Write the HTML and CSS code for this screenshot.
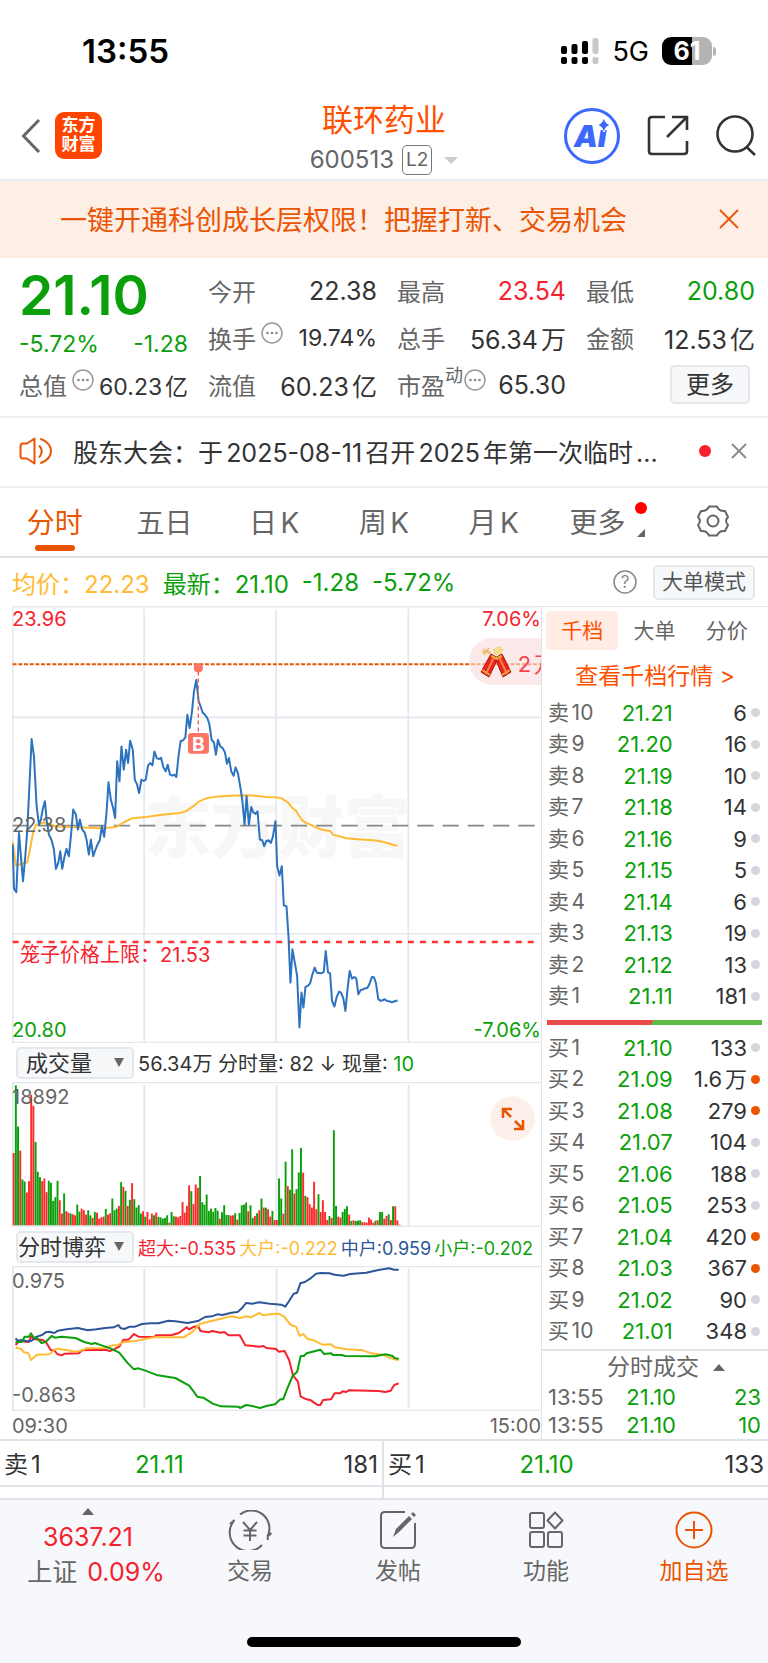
FILE: index.html
```html
<!DOCTYPE html>
<html lang="zh-CN">
<head>
<meta charset="utf-8">
<meta name="viewport" content="width=device-width, initial-scale=1">
<title>联环药业 600513</title>
<link rel="stylesheet" href="styles.css">
</head>
<body>
<div class="status">
  <span class="clock">13:55</span>
  <div class="status-right">
    <svg class="signal" viewBox="0 0 38 27" aria-hidden="true">
      <g fill="#000"><rect x="0" y="8" width="6" height="8" rx="2"/><rect x="10.500" y="6" width="6" height="10" rx="2"/><rect x="21" y="3" width="6" height="13" rx="2"/><rect x="0" y="19" width="6" height="7" rx="2"/><rect x="10.500" y="19" width="6" height="7" rx="2"/><rect x="21" y="19" width="6" height="7" rx="2"/></g>
      <g fill="#c8c8c8"><rect x="31.500" y="0" width="6" height="16" rx="2"/><rect x="31.500" y="19" width="6" height="7" rx="2"/></g>
    </svg>
    <span class="net">5G</span>
    <span class="battery"><span class="battery-body">61</span><span class="battery-tip"></span></span>
  </div>
</div>

<header class="top">
  <div class="top-left">
    <button class="plain" aria-label="返回"><svg width="20" height="36" viewBox="0 0 20 36"><path d="M18 2 2.500 18 18 34" fill="none" stroke="#666" stroke-width="3"/></svg></button>
    <a class="logo" href="#">东方<br>财富</a>
  </div>
  <div class="top-title">
    <h1>联环药业</h1>
    <div class="code"><span>600513</span><span class="l2">L2</span><i class="caret"></i></div>
  </div>
  <div class="top-right">
    <button class="plain" aria-label="Ai"><svg width="58" height="58" viewBox="0 0 58 58"><circle cx="29" cy="29" r="26.500" fill="#fff" stroke="#3c68fd" stroke-width="3"/><text class="ai" x="11" y="40">Ai</text><path d="M41 11 43 15.500 47 18 43 20.500 41 25 38.500 20.500 35 18 38.500 15.500Z" fill="#3c68fd" stroke="#fff" stroke-width="1"/></svg></button>
    <button class="plain" aria-label="分享"><svg width="42" height="42" viewBox="0 0 42 42" fill="none" stroke="#333" stroke-width="2.600"><path d="M18 2H5Q2 2 2 5V36Q2 39 5 39H37Q40 39 40 36V26M25 2H40V15M40 2 20 22"/></svg></button>
    <button class="plain" aria-label="搜索"><svg width="42" height="42" viewBox="0 0 42 42" fill="none" stroke="#333" stroke-width="2.600"><circle cx="20" cy="19" r="17.500"/><path d="M31.500 32 40 40"/></svg></button>
  </div>
</header>

<div class="banner">
  <a href="#">一键开通科创成长层权限！把握打新、交易机会</a>
  <button class="plain" aria-label="关闭"><svg width="20" height="20" viewBox="0 0 20 20"><path d="M1 1 19 19M19 1 1 19" stroke="#ea5504" stroke-width="1.800"/></svg></button>
</div>

<section class="quote">
  <strong class="price">21.10</strong>
  <div class="cell"><span>今开</span><b>22.38</b></div>
  <div class="cell"><span>最高</span><b class="red">23.54</b></div>
  <div class="cell"><span>最低</span><b class="green">20.80</b></div>

  <div class="cell change"><b class="green">-5.72%</b><b class="green">-1.28</b></div>
  <div class="cell"><span>换手</span><svg class="info" viewBox="0 0 22 22"><use href="#dots"/></svg><b class="tight">19.74%</b></div>
  <div class="cell"><span>总手</span><b>56.34万</b></div>
  <div class="cell"><span>金额</span><b>12.53亿</b></div>

  <div class="cell"><span>总值</span><svg class="info" viewBox="0 0 22 22"><use href="#dots"/></svg><b class="tight">60.23亿</b></div>
  <div class="cell"><span>流值</span><b>60.23亿</b></div>
  <div class="cell"><span>市盈</span><small>动</small><svg class="info" viewBox="0 0 22 22"><use href="#dots"/></svg><b>65.30</b></div>
  <button class="soft more">更多</button>
</section>

<div class="notice">
  <svg width="34" height="30" viewBox="0 0 34 30" fill="none" stroke="#ea5504" stroke-width="2" stroke-linejoin="round" stroke-linecap="round"><path d="M15.500 2.500V27.500L8 22.500H4Q1.500 22.500 1.500 20V10Q1.500 7.500 4 7.500H8ZM20.500 10Q25 15 20.500 21M22 3Q32 7 32 15T22 27"/></svg>
  <a href="#">股东大会：于2025-08-11召开2025年第一次临时...</a>
  <i class="dot-red"></i>
  <button class="plain" aria-label="关闭公告"><svg width="16" height="16" viewBox="0 0 16 16"><path d="M1 1 15 15M15 1 1 15" stroke="#888" stroke-width="1.800"/></svg></button>
</div>

<nav class="tabs">
  <button class="plain on">分时</button>
  <button class="plain">五日</button>
  <button class="plain">日K</button>
  <button class="plain">周K</button>
  <button class="plain">月K</button>
  <button class="plain"><span class="tab-more">更多<i class="badge"></i><i class="corner"></i></span></button>
  <button class="plain" aria-label="设置"><svg width="32" height="32" viewBox="0 0 32 32" fill="none" stroke="#666" stroke-width="2" stroke-linejoin="round"><path d="M12 1.500H20C21.500 5 24 6.500 28 6L31 12C28.500 14.500 28.500 17.500 31 20L28 26C24 25.500 21.500 27 20 30.500H12C10.500 27 8 25.500 4 26L1 20C3.500 17.500 3.500 14.500 1 12L4 6C8 6.500 10.500 5 12 1.500Z"/><circle cx="16" cy="16" r="5.500"/></svg></button>
</nav>

<div class="latest">
  <span class="amber">均价：22.23</span>
  <span class="green">最新：21.10</span><span class="green">-1.28</span><span class="green">-5.72%</span>
  <svg class="help" width="24" height="24" viewBox="0 0 24 24"><circle cx="12" cy="12" r="11" fill="none" stroke="#888" stroke-width="1.500"/><text x="12" y="18">?</text></svg>
  <button class="soft mode">大单模式</button>
</div>

<main class="board">
  <section class="charts">
    <div class="plot">
      <svg viewBox="36 18 1590 1314" aria-label="分时走势">
        <text class="mark" x="434" y="756">东方财富</text>
        <path class="grid" d="M36 20H1626M38 18V1330M433 27V1328M830 27V1328M1227 27V1328M38 353H1626M38 1003H1626M36 1330H1626"/>
        <path d="M38 678H1614" stroke="#888" stroke-width="5" stroke-dasharray="49 27" fill="none"/>
        <path d="M38 193H1626" stroke="#ea5504" stroke-width="6" stroke-dasharray="12 5" fill="none"/>
        <path d="M38 1028H1614" stroke="#f33" stroke-width="7" stroke-dasharray="18 18" fill="none"/>
        <polyline class="line" stroke="#ffbb33" points="38,728 48,798 82,788 90,750 100,695 108,676 135,668 165,680 225,683 305,686 350,682 372,668 398,656 440,652 480,646 540,640 557,636 570,627 585,617 597,606 620,596 650,591 690,588 740,587 775,589 800,592 830,593 848,597 868,611 876,622 890,634 906,660 920,670 935,676 945,682 965,690 992,694 1002,706 1020,710 1040,716 1075,719 1130,723 1160,729 1185,737 1195,738"/>
        <polyline class="line" stroke="#2c72bf" points="38,735 42,868 49,878 57,700 69,845 76,770 82,690 95,418 102,470 110,620 117,675 123,660 128,630 135,605 140,660 147,705 155,722 162,750 168,808 175,790 181,755 187,808 194,770 200,748 207,770 214,700 220,630 228,645 234,690 240,660 247,690 254,698 260,720 267,765 273,720 280,770 287,750 293,735 300,722 306,680 313,712 320,640 326,548 333,600 340,625 346,655 352,485 359,545 365,440 372,510 379,450 385,490 391,423 399,450 405,540 412,555 418,580 425,540 432,544 438,540 445,497 452,490 458,497 464,455 471,475 478,478 484,474 491,503 498,515 504,495 511,525 518,528 524,525 530,532 537,465 543,424 550,422 557,413 563,345 570,385 577,335 583,275 590,240 597,305 603,320 609,338 616,345 623,355 629,372 636,420 643,428 649,465 655,420 662,440 669,445 676,458 682,492 688,475 695,515 702,528 708,503 715,520 722,560 728,600 735,675 741,590 748,675 755,622 761,638 768,643 774,635 781,720 788,722 794,740 800,725 807,722 814,730 820,712 828,665 833,800 840,828 847,800 853,918 861,920 867,1010 873,1150 879,1050 886,1090 893,1130 900,1285 906,1180 912,1225 918,1163 925,1160 932,1152 939,1125 946,1105 952,1120 966,1122 973,1118 979,1055 986,1120 992,1122 998,1205 1005,1222 1012,1193 1019,1177 1025,1180 1032,1198 1038,1235 1045,1165 1051,1115 1058,1138 1065,1133 1071,1138 1077,1185 1084,1172 1090,1171 1097,1167 1104,1166 1110,1155 1118,1133 1124,1134 1130,1152 1137,1200 1144,1205 1150,1203 1156,1200 1163,1205 1170,1206 1178,1209 1186,1206 1195,1204"/>
        <path d="M596 215V398" stroke="#f65a50" stroke-width="4" stroke-dasharray="12 9" fill="none"/>
        <circle cx="596" cy="204" r="14" fill="#fb7468"/>
        <rect x="565" y="400" width="63" height="62" rx="10" fill="#fb7468"/>
        <text class="buy" x="596" y="453">B</text>
      </svg>
      <span class="tag tl red">23.96</span>
      <span class="tag tr red">7.06%</span>
      <span class="tag ml">22.38</span>
      <span class="tag bl green">20.80</span>
      <span class="tag br green">-7.06%</span>
      <span class="tag cage red">笼子价格上限：21.53</span>
      <div class="cracker">
        <svg width="32" height="32" viewBox="0 0 32 32"><g stroke="#e9b95c" stroke-width="1.500"><path d="M3 3 10 8M9 2 4 9M2 6H11M17 1V9M13 4H23M14 8 21 1"/></g><circle cx="18" cy="5" r="4" fill="#f6dc86"/><g stroke="#a8160f" stroke-width="1"><path d="M11 8 18 12 9 31 1 26Z" fill="#e8261a"/><path d="M22 8 15 12 23 31 31 26Z" fill="#e8261a"/></g><path d="M14 11 6 28M19 11 27 28" stroke="#ff7a55" stroke-width="2"/><path d="M2 24 10 29M30 24 22 29M11 10 18 13M22 10 15 13" stroke="#edaa3c" stroke-width="2"/></svg>
        <span>2万</span>
      </div>
    </div>

    <div class="bar">
      <label class="pick first"><select aria-label="指标一"><option>成交量</option></select><i></i></label>
      <span class="vol-info">56.34万 分时量: 82 ↓ 现量: <em class="green">10</em></span>
    </div>
    <div class="plot small">
      <svg viewBox="34 129 1510 433" preserveAspectRatio="none" aria-label="成交量">
        <path class="grid thin" d="M34 130H1544M36 130V562M412 138V558M789 138V558M1166 138V558M34 561H1544"/>
        <g id="volume"></g>
      </svg>
      <span class="tag tl">18892</span>
      <button class="expand" aria-label="展开"><svg width="24" height="24" viewBox="0 0 24 24" fill="none" stroke="#ea5504" stroke-width="2.500"><path d="M2 11V2H11M2 2 10 10M22 13V22H13M22 22 14 14"/></svg></button>
    </div>

    <div class="bar">
      <label class="pick"><select aria-label="指标二"><option>分时博弈</option></select><i></i></label>
      <span class="game"><span class="red">超大:-0.535</span><span class="amber">大户:-0.222</span><span class="navy">中户:0.959</span><span class="green">小户:-0.202</span></span>
    </div>
    <div class="plot small">
      <svg viewBox="34 138 1510 435" preserveAspectRatio="none" aria-label="分时博弈">
        <path class="grid thin" d="M34 139H1544M36 138V573M412 146V564M789 146V564M1166 146V564M34 572H1544"/>
        <polyline class="line thin" stroke="#f5222d" points="44,375 55,363 82,366 88,350 100,358 122,360 132,368 145,391 155,391 163,402 175,406 185,401 225,400 235,391 300,389 313,393 325,388 340,380 352,359 367,359 382,342 395,350 440,351 445,346 490,345 510,339 532,322 540,328 550,322 565,318 572,333 595,337 605,333 630,338 640,336 652,346 684,346 700,376 740,380 752,378 760,384 788,387 795,395 812,393 825,420 836,466 850,485 858,530 875,538 887,541 905,554 914,555 922,540 945,538 955,520 970,520 978,514 988,516 995,511 1080,513 1100,516 1115,512 1125,495 1138,490"/>
        <polyline class="line thin" stroke="#ffbb33" points="44,383 60,386 68,397 80,399 88,420 105,404 140,403 160,386 185,389 215,395 235,391 245,385 300,384 320,376 335,376 350,367 385,363 410,358 440,352 525,352 533,346 550,335 570,312 600,304 630,296 660,289 685,294 702,289 715,292 740,279 752,286 775,282 795,281 810,289 830,315 845,320 855,348 865,342 878,357 895,361 920,374 945,373 955,382 990,388 1035,391 1060,400 1090,404 1125,418 1138,420"/>
        <polyline class="line thin" stroke="#2c5699" points="44,355 50,362 62,360 75,364 90,362 105,350 120,345 130,337 140,335 155,339 165,332 190,328 222,324 250,331 275,328 300,324 325,322 337,315 345,325 355,327 370,320 385,320 405,312 430,310 452,310 480,302 500,304 535,309 567,302 585,291 605,289 620,283 635,285 660,278 678,276 690,265 702,249 720,251 740,247 770,251 803,254 814,260 825,243 838,221 848,218 857,190 870,186 885,176 902,161 915,159 940,160 955,164 980,167 1000,162 1045,158 1080,150 1110,145 1125,149 1138,149"/>
        <polyline class="line thin" stroke="#0b9f0b" points="44,366 62,366 70,350 82,350 88,340 95,352 105,353 118,369 130,366 147,348 157,353 175,350 215,354 240,366 262,372 270,369 290,376 315,385 340,398 365,430 382,448 395,445 415,452 450,466 500,474 540,497 563,530 580,533 607,551 630,559 680,560 685,564 702,555 720,558 742,564 760,558 785,553 800,538 808,538 820,505 835,468 848,455 858,408 867,408 875,400 900,393 914,389 925,402 945,400 950,405 975,405 985,408 1070,409 1100,403 1118,407 1128,415 1138,416"/>
      </svg>
      <span class="tag tl">0.975</span>
      <span class="tag bl low">-0.863</span>
    </div>
    <div class="axis"><span>09:30</span><span>15:00</span></div>
  </section>

  <aside class="side">
    <div class="side-tabs"><button class="plain on">千档</button><button class="plain">大单</button><button class="plain">分价</button></div>
    <a class="deep" href="#">查看千档行情 &gt;</a>
    <table class="book">
      <tr><th>卖10</th><td>21.21</td><td>6</td><td><i></i></td></tr>
      <tr><th>卖9</th><td>21.20</td><td>16</td><td><i></i></td></tr>
      <tr><th>卖8</th><td>21.19</td><td>10</td><td><i></i></td></tr>
      <tr><th>卖7</th><td>21.18</td><td>14</td><td><i></i></td></tr>
      <tr><th>卖6</th><td>21.16</td><td>9</td><td><i></i></td></tr>
      <tr><th>卖5</th><td>21.15</td><td>5</td><td><i></i></td></tr>
      <tr><th>卖4</th><td>21.14</td><td>6</td><td><i></i></td></tr>
      <tr><th>卖3</th><td>21.13</td><td>19</td><td><i></i></td></tr>
      <tr><th>卖2</th><td>21.12</td><td>13</td><td><i></i></td></tr>
      <tr><th>卖1</th><td>21.11</td><td>181</td><td><i></i></td></tr>
    </table>
    <div class="ratio"></div>
    <table class="book">
      <tr><th>买1</th><td>21.10</td><td>133</td><td><i></i></td></tr>
      <tr><th>买2</th><td>21.09</td><td>1.6万</td><td><i class="hot"></i></td></tr>
      <tr><th>买3</th><td>21.08</td><td>279</td><td><i class="hot"></i></td></tr>
      <tr><th>买4</th><td>21.07</td><td>104</td><td><i></i></td></tr>
      <tr><th>买5</th><td>21.06</td><td>188</td><td><i></i></td></tr>
      <tr><th>买6</th><td>21.05</td><td>253</td><td><i></i></td></tr>
      <tr><th>买7</th><td>21.04</td><td>420</td><td><i class="hot"></i></td></tr>
      <tr><th>买8</th><td>21.03</td><td>367</td><td><i class="hot"></i></td></tr>
      <tr><th>买9</th><td>21.02</td><td>90</td><td><i></i></td></tr>
      <tr><th>买10</th><td>21.01</td><td>348</td><td><i></i></td></tr>
    </table>
    <div class="deals">
      <button class="plain deals-head">分时成交<i></i></button>
      <div class="deal"><span>13:55</span><b>21.10</b><b>23</b></div>
      <div class="deal"><span>13:55</span><b>21.10</b><b>10</b></div>
    </div>
  </aside>
</main>

<div class="best">
  <div><span>卖1</span><b class="green">21.11</b><span>181</span></div>
  <div><span>买1</span><b class="green">21.10</b><span>133</span></div>
</div>
<div class="best-gap"><div></div><div></div></div>

<footer class="dock">
  <nav>
    <a class="index" href="#"><i></i><span class="red">3637.21</span><span class="change-line">上证<em class="red">0.09%</em></span></a>
    <a href="#"><svg width="44" height="40" viewBox="0 0 44 40" fill="none" stroke="#666" stroke-width="2"><path d="M12 4.500A18 18 0 0 1 39.500 26.500L43.500 23M2 14 6.500 10A18 18 0 0 0 34 35M39.500 26.500 40 30M15 12 22 20 29 12M22 20V31M15.500 20.500H28.500M15.500 25.500H28.500"/></svg>交易</a>
    <a href="#"><svg width="38" height="40" viewBox="0 0 38 40" fill="none" stroke="#666" stroke-width="2"><path d="M26 2H6Q2 2 2 6V34Q2 38 6 38H32Q36 38 36 34V13"/><path d="M14 27 17 19 30 6 33 9 20 22ZM32 4 34 2 37 5 35 7Z" fill="#666" stroke="none"/></svg>发帖</a>
    <a href="#"><svg width="36" height="38" viewBox="0 0 36 38" fill="none" stroke="#666" stroke-width="2"><rect x="2" y="2" width="14" height="15" rx="2"/><rect x="2" y="21" width="14" height="15" rx="2"/><rect x="20" y="21" width="14" height="15" rx="2"/><path d="M27 1.500 34.500 9.500 27 17.500 19.500 9.500Z" stroke-linejoin="round"/></svg>功能</a>
    <a class="add" href="#"><svg width="40" height="40" viewBox="0 0 40 40" fill="none" stroke="#ea5504" stroke-width="2"><circle cx="20" cy="20" r="17.500"/><path d="M11 20H29M20 11V29"/></svg>加自选</a>
  </nav>
  <div class="home"></div>
</footer>

<svg width="0" height="0" class="defs" aria-hidden="true"><defs><g id="dots"><circle cx="11" cy="11" r="10" fill="none" stroke="#999" stroke-width="1.500"/><circle cx="6.500" cy="11" r="1.300" fill="#888"/><circle cx="11" cy="11" r="1.300" fill="#888"/><circle cx="15.500" cy="11" r="1.300" fill="#888"/></g></defs></svg>
<script src="volume.js"></script>
</body>
</html>
```
FILE: volume.js
```js
// One bar per minute: r = up tick, g = down tick, followed by the bar height.
const bars = `r216 g418 g295 r223 g137 g131 r98 r132 r390 r357 g249 g160 g144 r132 r140 r99 g133 g127 g73 g84
g133 r75 r35 g95 r42 r38 g35 r33 r30 g62 g41 r50 r45 r32 g45 g30 r22 g40 r38 r20
r24 r26 g49 r32 r36 g80 g45 g50 r58 g129 r115 g103 r58 g76 r126 g78 g53 g60 g35 r42
g26 r40 r18 r35 g30 r38 g25 g24 g20 g22 g30 r8 g40 g27 r26 r24 r28 r70 r38 r58
r119 g102 r64 r122 r112 g147 g69 g62 g92 g43 g50 g40 g52 g44 r20 g39 g60 g31 g31 r29
r30 g36 r17 g37 g60 g62 g68 r42 g60 g22 r28 g36 r45 g80 r53 g53 r48 r26 g43 r16
r16 g140 g80 r35 g190 r117 g106 g227 r95 g108 g158 g231 r157 g88 r84 r63 r53 r130 r48 g93
r40 r75 r40 r16 g28 r22 g284 g58 r26 r23 g40 g49 g57 r32 g13 r15 g13 g14 g15 r10
r9 r8 r23 r17 r8 g14 r15 g40 g40 r20 r28 g33 r16 g57 r57 r15 r2`.split(/\s+/);

const group = document.getElementById('volume');
const step = 1108 / bars.length;
bars.forEach((bar, i) => {
  const height = Number(bar.slice(1));
  const rect = document.createElementNS('http://www.w3.org/2000/svg', 'rect');
  rect.setAttribute('x', 36 + i * step);
  rect.setAttribute('y', 557 - height);
  rect.setAttribute('width', 5.5);
  rect.setAttribute('height', height);
  rect.setAttribute('fill', bar[0] === 'r' ? '#fb2b2b' : '#0a9f0a');
  group.appendChild(rect);
});
```
FILE: styles.css
```css
* { box-sizing: border-box; }
body { margin: 0; background: #fff; color: #333; font-family: Inter, "Noto Sans CJK SC", sans-serif; font-size: 22px; text-autospace: normal; }
a { color: inherit; text-decoration: none; }
b, em, i { font-weight: 400; font-style: normal; }
svg { display: block; flex: none; }
button, select { font: inherit; color: inherit; }
.plain { border: 0; padding: 0; background: none; }
.red { color: #f5222d; }
.green { color: #0b9f0b; }
.amber { color: #ffbb33; }
.navy { color: #2c5699; }
.defs { position: absolute; }

.status { display: flex; align-items: center; justify-content: space-between; height: 92px; padding: 10px 52px 0 82px; color: #000; }
.clock { font-size: 33px; font-weight: 600; }
.status-right { display: flex; align-items: center; gap: 13px; }
.signal { width: 38px; height: 27px; }
.net { font-size: 27px; }
.battery { display: flex; align-items: center; gap: 1px; }
.battery-body { width: 50px; height: 28px; border-radius: 9px; background: linear-gradient(90deg, #000 61%, #b4b4b4 61%); color: #fff; font-size: 25px; font-weight: 700; line-height: 28px; text-align: center; }
.battery-tip { width: 3px; height: 9px; border-radius: 0 3px 3px 0; background: #b4b4b4; }

.top { display: grid; grid-template-columns: 1fr auto 1fr; align-items: center; height: 89px; border-bottom: 2px solid #eceef1; }
.top-left { display: flex; align-items: center; gap: 14px; padding-left: 21px; }
.logo { width: 47px; height: 47px; padding-top: 4px; border-radius: 9px; background: #ff4400; color: #fff; font-size: 17px; font-weight: 700; line-height: 19px; text-align: center; }
.top-title { padding-top: 5px; text-align: center; }
h1 { margin: 0; color: #ff5000; font-size: 31px; font-weight: 400; line-height: 44px; }
.code { display: flex; align-items: center; gap: 8px; color: #666; font-size: 24px; line-height: 36px; }
.l2 { padding: 0 3px; border: 1px solid #777; border-radius: 5px; font-size: 19px; line-height: 28px; }
.caret { margin-left: 4px; border: 7px solid transparent; border-top-color: #ccc; border-bottom: 0; }
.top-right { display: flex; align-items: center; justify-content: flex-end; gap: 26px; padding-right: 11px; }
.ai { fill: #3c68fd; font: italic 900 30px Inter, sans-serif; }

.banner { display: flex; align-items: center; justify-content: space-between; height: 77px; padding: 0 29px 2px 60px; background: #fdeee6; color: #ea5504; font-size: 27px; }

.quote { display: grid; grid-template-columns: repeat(4, 1fr); grid-auto-rows: 47px; column-gap: 20px; align-items: center; padding: 9px 13px 8px 19px; border-bottom: 2px solid #eceef1; font-size: 24px; }
.price { padding-top: 8px; color: #0b9f0b; font-size: 55px; font-weight: 600; line-height: 48px; }
.cell { display: flex; align-items: center; white-space: nowrap; }
.cell > span { color: #666; }
.cell b { margin-left: auto; font-size: 25px; }
.cell small { align-self: flex-start; color: #666; font-size: 18px; line-height: 18px; }
.cell .tight { font-size: 23px; }
.change { padding-top: 12px; }
.cell.change b { font-size: 23px; }
.change b:first-child { margin: 0; }
.info { width: 22px; height: 22px; margin: 0 0 10px 5px; }
small + .info { margin-left: 1px; }
.soft { border: 2px solid #e4e7ec; border-radius: 5px; background: #f7f8fa; padding: 0; }
.more { justify-self: end; width: 80px; height: 39px; margin-right: 5px; line-height: 30px; }

.notice { display: flex; align-items: center; height: 70px; padding: 0 21px 2px 19px; border-bottom: 2px solid #eceef1; font-size: 25px; }
.notice a { flex: 1; margin-left: 20px; white-space: nowrap; }
.dot-red { width: 12px; height: 12px; margin-right: 20px; border-radius: 50%; background: #f5222d; }

.tabs { display: grid; grid-template-columns: repeat(7, 1fr); height: 70px; border-bottom: 2px solid #dfe2e9; color: #666; font-size: 28px; }
.tabs button { display: flex; align-items: center; justify-content: center; padding-bottom: 2px; }
.tabs .on { position: relative; color: #ea5504; }
.tabs .on::after { content: ""; position: absolute; bottom: 5px; width: 40px; height: 6px; border-radius: 3px; background: #ea5504; }
.tab-more { position: relative; margin-right: 12px; }
.badge { position: absolute; top: 1px; right: -22px; width: 12px; height: 12px; border-radius: 50%; background: #f00; }
.corner { position: absolute; right: -20px; bottom: 4px; border-left: 8px solid transparent; border-bottom: 8px solid #666; }

.latest { display: flex; align-items: center; gap: 13px; height: 48px; padding: 0 13px 0 12px; font-size: 24px; }
.help { margin-left: auto; }
.help text { fill: #888; font-size: 17px; text-anchor: middle; }
.mode { width: 102px; height: 35px; margin-left: 3px; color: #555; font-size: 21px; line-height: 28px; }

.board { display: grid; grid-template-columns: 542fr 226fr; border-bottom: 2px solid #dfe2e9; }
.charts { min-width: 0; padding-left: 12px; border-right: 1px solid #dfe2e9; }
.plot { position: relative; overflow: hidden; }
.plot > svg { width: 100%; height: auto; }
.plot.small > svg { height: 145px; }
.grid { fill: none; stroke: #e4e7ee; stroke-width: 5; }
.grid.thin { stroke-width: 2; vector-effect: non-scaling-stroke; }
.line { fill: none; stroke-width: 6; stroke-linejoin: round; }
.line.thin { stroke-width: 2; vector-effect: non-scaling-stroke; }
.mark { fill: #f7f7f8; font-size: 200px; font-weight: 900; }
.buy { fill: #fff; font-size: 58px; font-weight: 700; text-anchor: middle; }
.tag { position: absolute; color: #666; font-size: 20px; line-height: 24px; }
.tag.red { color: #f5222d; }
.tag.green { color: #0b9f0b; }
.tl { top: 1px; left: 0; }
.tr { top: 1px; right: 0; }
.ml { top: 50%; left: 0; margin-top: -12px; }
.bl { bottom: 1px; left: 0; }
.low { bottom: 4px; }
.br { right: 0; bottom: 1px; }
.cage { top: 77%; left: 8px; }
.small .tl { top: 3px; }
.cracker { position: absolute; top: 32px; right: -15px; display: flex; align-items: center; gap: 6px; height: 47px; padding-left: 11px; border-radius: 24px 0 0 24px; background: rgba(250, 220, 220, .6); color: #f5444d; font-size: 22px; }
.expand { position: absolute; top: 14px; right: 6px; display: grid; place-items: center; width: 45px; height: 45px; border: 0; padding: 0; border-radius: 50%; background: #fdf0ea; }

.bar { display: flex; align-items: center; gap: 4px; height: 39px; padding-left: 4px; white-space: nowrap; }
.pick { display: grid; align-items: center; }
.pick select, .pick i { grid-area: 1 / 1; }
.pick select { width: 118px; height: 32px; border: 2px solid #e4e7ec; border-radius: 5px; padding: 0; background: #f7f8fa; appearance: none; font-size: 22px; }
.pick.first select { padding-left: 8px; }
.pick i { justify-self: end; margin-right: 10px; border: 5px solid transparent; border-top: 9px solid #666; border-bottom: 0; pointer-events: none; }
.vol-info { font-size: 20px; text-autospace: no-autospace; }
.game { display: flex; gap: 3px; font-size: 18px; text-autospace: no-autospace; }
.axis { display: flex; justify-content: space-between; height: 28px; color: #666; font-size: 20px; line-height: 30px; }

.side-tabs { display: grid; grid-template-columns: repeat(3, 1fr); height: 43px; padding: 4px 5px 0 4px; color: #666; font-size: 21px; }
.side-tabs button { padding-bottom: 4px; }
.side-tabs .on { border-radius: 5px; background: #ffede5; color: #ff5000; }
.side { border-top: 1px solid #e4e7ee; }
.deep { display: block; height: 47px; color: #ff5000; font-size: 23px; line-height: 52px; text-align: center; }
.book { width: 100%; height: 315px; border-spacing: 0; table-layout: fixed; font-size: 22px; line-height: 24px; }
.book th, .book td { padding: 0; text-align: right; }
.book th { width: 25%; padding-left: 6px; color: #666; font-size: 21px; font-weight: 400; text-align: left; }
.book td:nth-child(2) { color: #0b9f0b; }
.book td:nth-child(4) { width: 21px; padding-left: 4px; }
.book i { display: block; width: 9px; height: 9px; border-radius: 50%; background: #d3d6dd; }
.book .hot { background: #ea5504; }
.ratio { height: 5px; margin: 8px 6px 7px 5px; background: linear-gradient(120deg, #eb4a4a 49%, #5dbb46 49%); }
.deals { margin-top: 2px; border-top: 2px solid #dfe2e9; }
.deals-head { display: flex; align-items: center; justify-content: center; gap: 14px; width: 100%; height: 32px; padding-left: 22px; color: #666; font-size: 23px; line-height: 31px; }
.deals-head i, .index i { border: 6px solid transparent; border-top: 0; border-bottom: 7px solid #666; }
.deal { display: grid; grid-template-columns: 60fr 68fr 85fr; height: 28px; padding: 0 7px 0 6px; color: #666; font-size: 22px; line-height: 28px; }
.deal b { color: #0b9f0b; text-align: right; }

.best, .best-gap { display: grid; grid-template-columns: 1fr 1fr; border-bottom: 2px solid #dfe2e9; }
.best div, .best-gap div { padding: 0 4px; }
.best div:first-child, .best-gap div:first-child { border-right: 2px solid #dfe2e9; }
.best div { display: grid; grid-template-columns: 35fr 30fr 35fr; height: 44px; font-size: 24px; line-height: 47px; }
.best div > :last-child { text-align: right; }
.best-gap div { height: 11px; }

.dock { padding-bottom: 18px; background: #f7f8fb; }
.dock nav { display: grid; grid-template-columns: 176fr 148fr 148fr 148fr 148fr; color: #666; }
.dock a { display: flex; flex-direction: column; align-items: center; gap: 6px; height: 137px; padding-top: 10px; font-size: 23px; line-height: 30px; }
.dock a svg { height: 40px; }
.dock .index { gap: 5px; padding-top: 8px; font-size: 25px; }
.index i { margin-bottom: 2px; }
.change-line { display: flex; gap: 10px; padding-left: 16px; }
.dock .add { color: #ea5504; }
.home { width: 274px; height: 10px; margin: 0 auto; border-radius: 5px; background: #000; }
```
